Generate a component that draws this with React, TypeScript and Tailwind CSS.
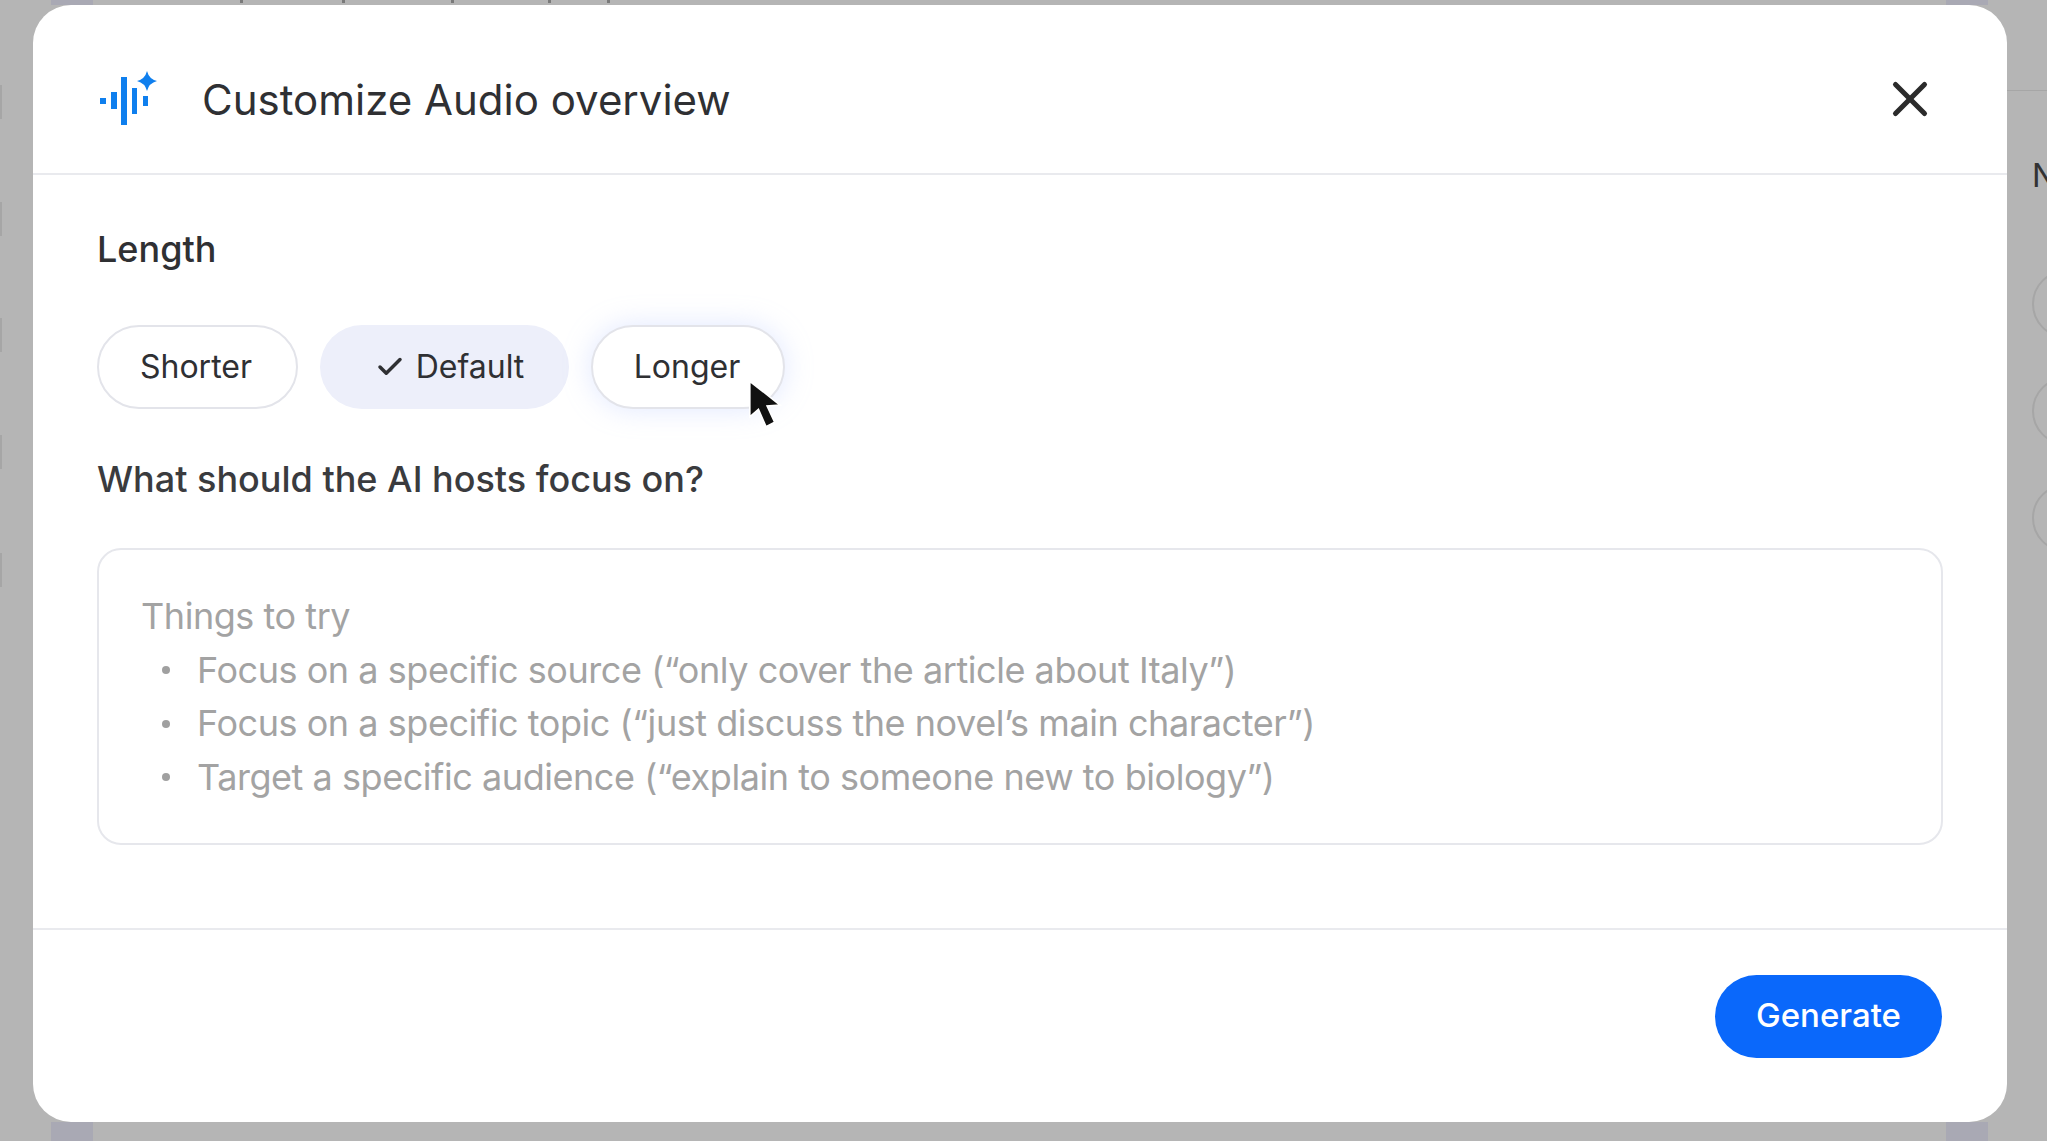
import { Check, X } from 'lucide-react';

const tips = [
    'Focus on a specific source (“only cover the article about Italy”)',
    'Focus on a specific topic (“just discuss the novel’s main character”)',
    'Target a specific audience (“explain to someone new to biology”)',
];

function AudioIcon() {
    return (
        <svg className="w-[58px] h-[56px] shrink-0" viewBox="0 0 58 56" fill="#0f7fee">
            <rect x="0" y="27" width="6" height="6" />
            <rect x="11" y="21" width="6" height="17" />
            <rect x="21" y="6" width="6" height="48" />
            <rect x="32" y="17" width="5" height="26" />
            <rect x="43" y="25" width="5" height="10" />
            <path d="M47 0 Q49 8 57 10 Q49 12 47 20 Q45 12 37 10 Q45 8 47 0Z" />
        </svg>
    );
}

function Backdrop() {
    return (
        <div className="absolute inset-0 overflow-hidden">
            <div className="absolute left-[51px] top-0 w-[42px] h-[5px] bg-[#a9a9b4]" />
            <div className="absolute left-[1946px] top-0 w-[42px] h-[5px] bg-[#a9a9b4]" />
            <div className="absolute left-[51px] bottom-0 w-[42px] h-[19px] bg-[#a9a9b4]" />
            <div className="absolute left-[1946px] bottom-0 w-[42px] h-[19px] bg-[#a9a9b4]" />
            {[240, 342, 451, 548, 607].map((x) => (
                <div key={x} className="absolute top-0 w-[3px] h-[3px] bg-[#7a7a7a]" style={{ left: x }} />
            ))}
            {[85, 202, 318, 435, 553].map((y) => (
                <div key={y} className="absolute left-0 w-[2px] h-[34px] bg-[#a6a6a6]" style={{ top: y }} />
            ))}
            <div className="absolute left-[2007px] top-[90px] w-[40px] h-[1px] bg-[#a6a6a6]" />
            <span className="absolute left-[2032px] top-[158px] text-[32px] leading-[36px] text-[#333333]">N</span>
            {[270, 377, 484].map((y) => (
                <div key={y} className="absolute left-[2032px] w-[68px] h-[68px] rounded-full border-2 border-[#a6a6a6]" style={{ top: y }} />
            ))}
        </div>
    );
}

export default function App() {
    return (
        <div className="relative w-full h-[1141px] overflow-hidden bg-[#b5b5b5] font-['Inter',sans-serif]">
            <Backdrop />

            <div className="relative ml-[33px] mt-[5px] w-[1974px] h-[1117px] rounded-[38px] bg-white flex flex-col">
                {/* Header */}
                <div className="h-[170px] shrink-0 border-b-2 border-[#e9eaee] pt-[20px] pl-[67px] pr-[68px] flex items-center">
                    <AudioIcon />
                    <h1 className="ml-[44px] text-[42px] font-normal text-[#2f3033]">Customize Audio overview</h1>
                    <X className="ml-auto w-[58px] h-[58px] text-[#2b2b2b]" strokeWidth={2.1} />
                </div>

                {/* Body */}
                <div className="flex-1 px-[64px] pt-[52px]">
                    <h2 className="text-[36px] leading-[44px] font-medium text-[#2f3033]">Length</h2>
                    <div className="mt-[54px] flex gap-[22px] text-[32px] text-[#2f3033]">
                        <div className="w-[201px] h-[84px] rounded-full border-2 border-[#e3e4ea] pr-[3px] flex items-center justify-center">Shorter</div>
                        <div className="w-[249px] h-[84px] rounded-full bg-[#edeffa] flex items-center justify-center gap-[11px] pl-[10px]">
                            <Check className="w-[30px] h-[30px]" strokeWidth={2.8} />
                            Default
                        </div>
                        <div className="w-[194px] h-[84px] rounded-full border-2 border-[#e3e4ea] bg-white pr-[2px] flex items-center justify-center shadow-[0_0_28px_rgba(170,190,255,0.35)]">Longer</div>
                    </div>
                    <h2 className="mt-[48px] text-[36px] leading-[44px] font-medium text-[#3a3b3e]">What should the AI hosts focus on?</h2>
                    <div className="mt-[47px] h-[297px] rounded-[24px] border-2 border-[#e6e7ec] pt-[40px] pl-[42px] text-[36px] leading-[53.5px] tracking-[-0.45px] text-[#a3a3a3]">
                        <p>Things to try</p>
                        <ul>
                            {tips.map((tip) => (
                                <li key={tip} className="flex items-center pl-[21px]">
                                    <span className="w-[8px] h-[8px] rounded-full bg-[#a0a0a0] mr-[27px]" />
                                    {tip}
                                </li>
                            ))}
                        </ul>
                    </div>
                </div>

                {/* Footer */}
                <div className="h-[194px] shrink-0 border-t-2 border-[#e9eaee] pb-[20px] pr-[65px] flex items-center justify-end">
                    <button className="w-[227px] h-[83px] rounded-full bg-[#0a68fb] text-white text-[33px] font-medium">Generate</button>
                </div>
            </div>

            {/* Mouse pointer */}
            <svg className="absolute left-[745px] top-[378px] w-[42px] h-[54px]" viewBox="0 0 38 50">
                <path d="M4 3 L4 36 L12 29 L19 45 L27 41 L20 26 L32 25 Z" fill="#111111" stroke="#ffffff" strokeWidth="1.5" />
            </svg>
        </div>
    );
}
